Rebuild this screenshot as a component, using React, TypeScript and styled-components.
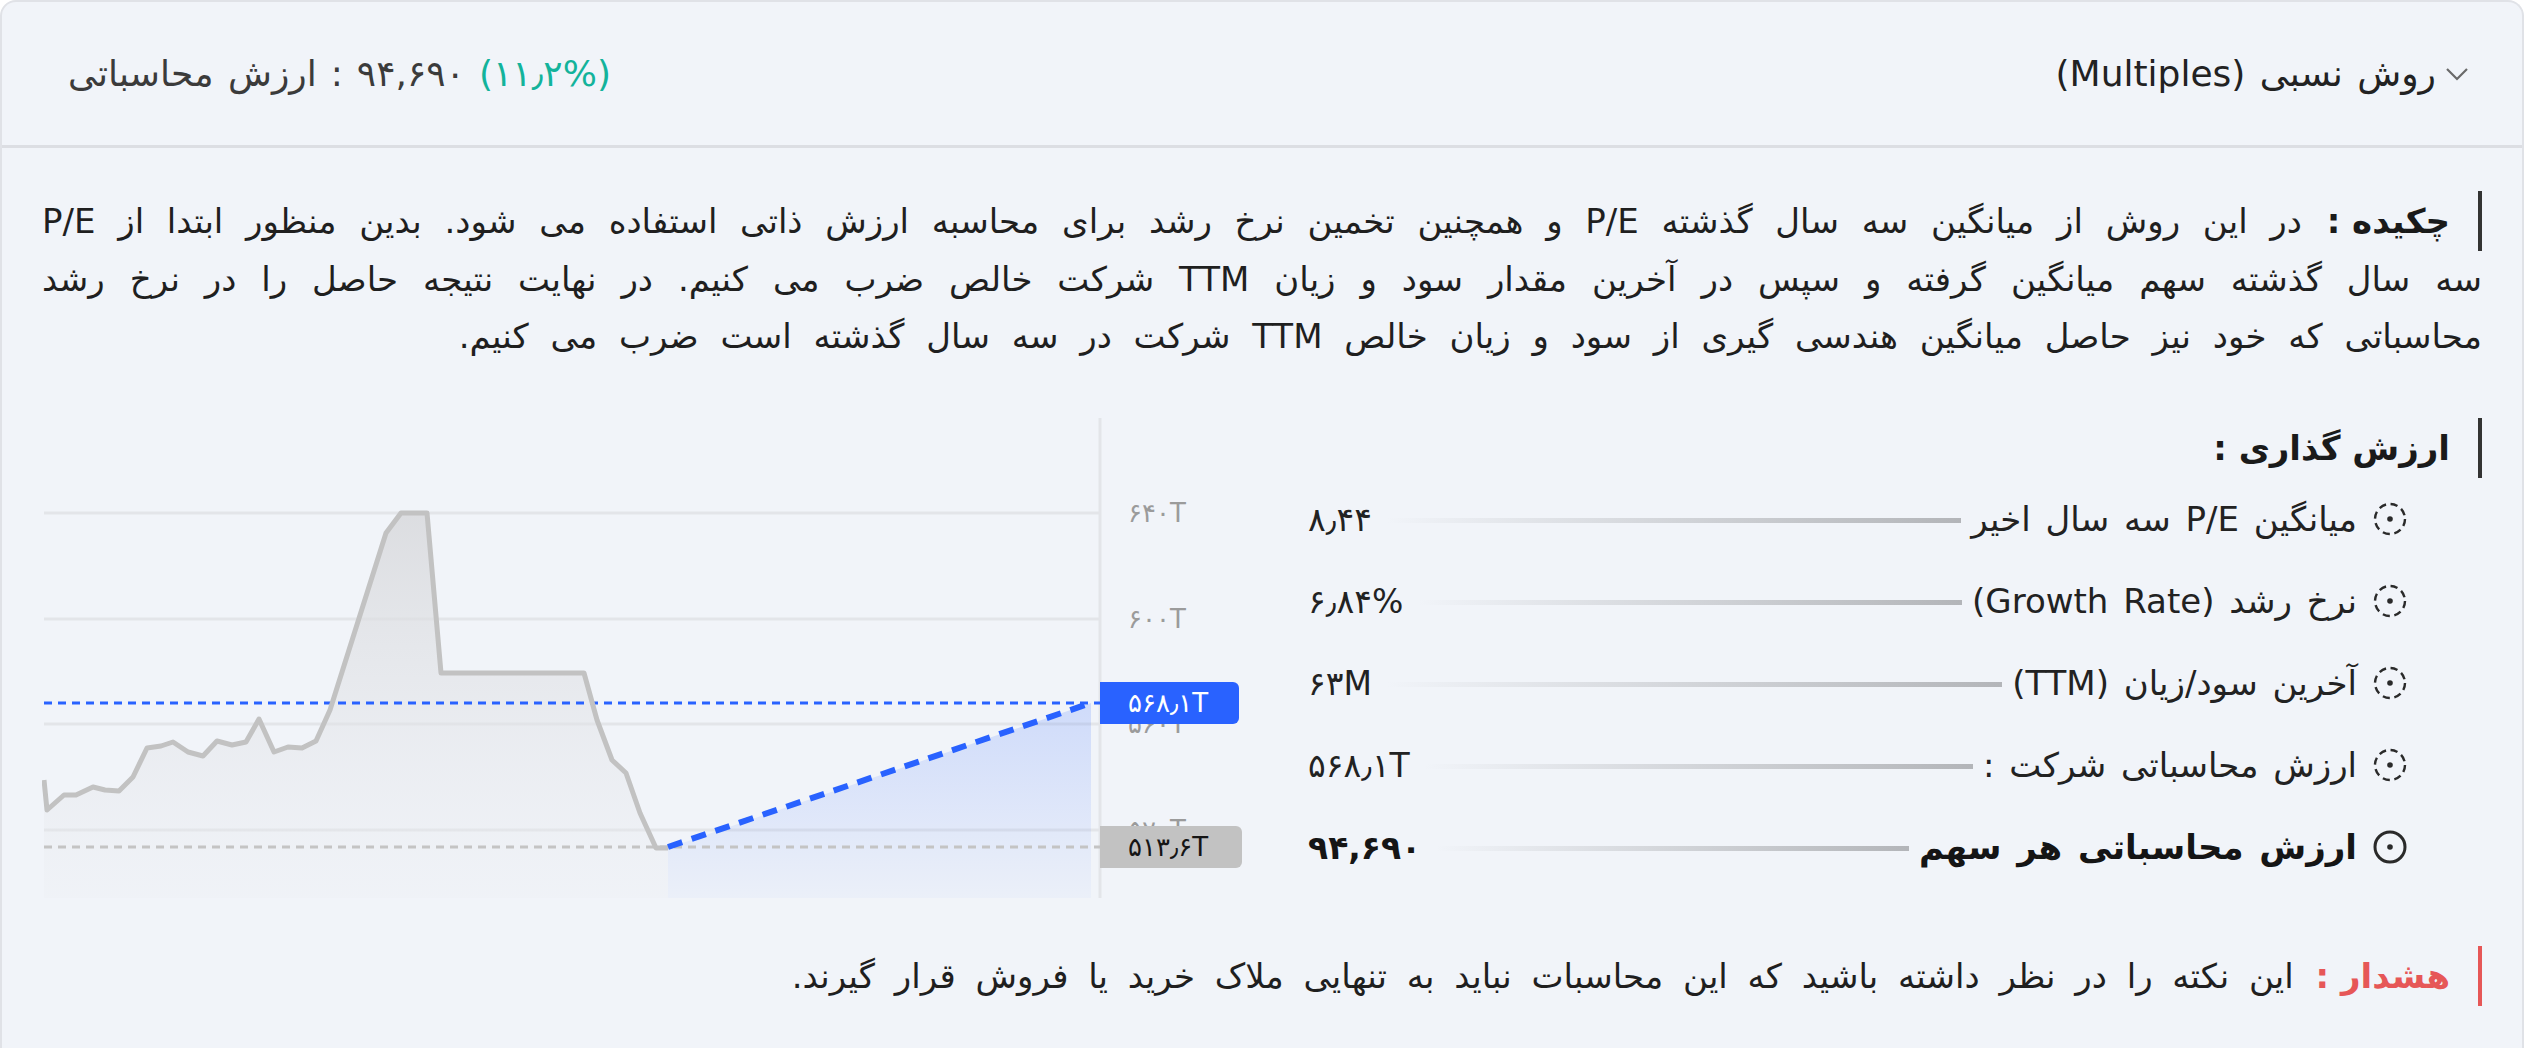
import React from "react";
import styled, { createGlobalStyle } from "styled-components";

const GlobalStyle = createGlobalStyle`
  html, body {
    margin: 0;
    padding: 0;
    background: #ffffff;
  }
  * {
    box-sizing: border-box;
  }
`;

const Card = styled.section`
  direction: rtl;
  width: 2524px;
  min-height: 1048px;
  background: #f1f4f9;
  border: 2px solid #e0e2e7;
  border-bottom: none;
  border-radius: 16px 16px 0 0;
  font-family: "DejaVu Sans", "Noto Sans", sans-serif;
  color: #1f1f1f;
`;

const Header = styled.header`
  display: flex;
  align-items: center;
  justify-content: space-between;
  height: 146px;
  padding: 0 52px 0 66px;
  border-bottom: 3px solid #dcdee3;
  font-size: 36px;
  word-spacing: 3px;
`;

const Toggle = styled.div`
  display: flex;
  align-items: center;
  gap: 8px;
  color: #222;
  cursor: pointer;
`;

const HeadValue = styled.div`
  display: flex;
  align-items: center;
  gap: 14px;
  color: #3b3b3b;
`;

const Pct = styled.span`
  color: #13b39b;
`;

const Body = styled.div`
  padding: 43px 40px 42px;
`;

const Summary = styled.p`
  margin: 0;
  font-size: 34px;
  line-height: 57px;
  word-spacing: 5px;
`;

const Line = styled.span<{ $last?: boolean }>`
  display: block;
  white-space: nowrap;
  text-align: ${(p) => (p.$last ? "start" : "justify")};
  text-align-last: ${(p) => (p.$last ? "start" : "justify")};
  word-spacing: ${(p) => (p.$last ? "11px" : "5px")};
`;

const Tag = styled.span<{ $color?: string }>`
  display: inline-block;
  line-height: 60px;
  padding-right: 28px;
  margin-left: 2px;
  border-right: 4px solid ${(p) => p.$color || "#333"};
  color: ${(p) => p.$color || "#1a1a1a"};
  font-weight: 700;
  word-spacing: 0;
`;

const Valuation = styled.div`
  display: grid;
  grid-template-columns: 1fr 1200px;
  gap: 66px;
  margin-top: 53px;
`;

const List = styled.div`
  display: flex;
  flex-direction: column;
`;

const ListTitle = styled.div`
  font-size: 34px;
  line-height: 59px;
`;

const Rows = styled.div`
  padding-right: 75px;
`;

const Row = styled.div<{ $strong?: boolean }>`
  display: flex;
  align-items: center;
  height: 82px;
  font-size: 34px;
  word-spacing: 4px;
  font-weight: ${(p) => (p.$strong ? 700 : 400)};
  color: ${(p) => (p.$strong ? "#151515" : "#222")};
`;

const IconSvg = styled.svg`
  flex: none;
  margin-left: 16px;
`;

const Label = styled.span`
  white-space: nowrap;
`;

const Track = styled.div`
  flex: 1;
  height: 5px;
  margin: 2px 10px 0 15px;
  background: linear-gradient(to left, #b3b5b9, rgba(214, 217, 222, 0));
`;

const Value = styled.span`
  white-space: nowrap;
  font-size: 33px;
`;

const ChartSvg = styled.svg`
  display: block;
  direction: ltr;
  font-family: "DejaVu Sans", sans-serif;
`;

const AxisText = styled.text<{ $fill?: string }>`
  font-size: 26px;
  fill: ${(p) => p.$fill || "#9b9b9b"};
`;

const Warning = styled.p`
  margin: 48px 0 0;
  font-size: 34px;
  line-height: 60px;
  word-spacing: 9px;
`;

const rows = [
  { label: "میانگین P/E سه سال اخیر", value: "۸٫۴۴" },
  { label: "نرخ رشد (Growth Rate)", value: "۶٫۸۴%" },
  { label: "آخرین سود/زیان (TTM)", value: "۶۳M" },
  { label: "ارزش محاسباتی شرکت :", value: "۵۶۸٫۱T" },
  { label: "ارزش محاسباتی هر سهم", value: "۹۴,۶۹۰", strong: true },
];

// price history, in chart pixels
const series: [number, number][] = [
  [2, 362], [5, 392], [22, 377], [34, 377], [51, 369], [63, 372], [77, 373],
  [91, 359], [105, 330], [119, 328], [131, 324], [146, 334], [161, 338],
  [175, 323], [190, 327], [204, 324], [217, 301], [232, 334], [246, 329],
  [260, 330], [274, 323], [288, 292], [344, 115], [359, 95], [385, 95],
  [399, 255], [542, 255], [555, 302], [570, 342], [584, 355], [598, 395],
  [614, 430], [626, 430],
];

function DotCircle({ solid }: { solid?: boolean }) {
  return (
    <IconSvg width={34} height={34} viewBox="0 0 34 34">
      <circle
        cx="17"
        cy="17"
        r="15"
        fill="none"
        stroke="#2a2a2a"
        strokeWidth={solid ? 3 : 2.4}
        strokeDasharray={solid ? undefined : "7.2 4.6"}
      />
      <circle cx="17" cy="17" r="2.8" fill="#2a2a2a" />
    </IconSvg>
  );
}

function Chart() {
  const line = series.map((p) => p.join(",")).join(" ");
  const area = `2,480 ${line} 626,480`;
  const grid = [95, 201, 306, 412];
  const ticks = ["۶۴۰T", "۶۰۰T", "۵۶۰T", "۵۲۰T"];

  return (
    <ChartSvg width={1200} height={480} viewBox="0 0 1200 480">
      <defs>
        <linearGradient id="grayFill" x1="0" y1="95" x2="0" y2="480" gradientUnits="userSpaceOnUse">
          <stop offset="0" stopColor="#d8d9dc" stopOpacity="0.85" />
          <stop offset="1" stopColor="#e9ebef" stopOpacity="0.2" />
        </linearGradient>
        <linearGradient id="blueFill" x1="0" y1="285" x2="0" y2="480" gradientUnits="userSpaceOnUse">
          <stop offset="0" stopColor="#2962ff" stopOpacity="0.17" />
          <stop offset="1" stopColor="#2962ff" stopOpacity="0.03" />
        </linearGradient>
      </defs>

      {grid.map((y) => (
        <line key={y} x1="2" y1={y} x2="1058" y2={y} stroke="#e3e5e9" strokeWidth="3" />
      ))}
      <line x1="1058" y1="0" x2="1058" y2="480" stroke="#e3e5e9" strokeWidth="3" />

      {ticks.map((t, i) => (
        <AxisText key={t} x="1086" y={grid[i]} dominantBaseline="central">
          {t}
        </AxisText>
      ))}

      <polygon points={area} fill="url(#grayFill)" />
      <polygon points="626,430 1049,285 1049,480 626,480" fill="url(#blueFill)" />

      <line x1="2" y1="285" x2="1058" y2="285" stroke="#2962ff" strokeWidth="3" strokeDasharray="8 6" />
      <line x1="2" y1="429" x2="1058" y2="429" stroke="#c4c4c4" strokeWidth="3" strokeDasharray="8 6" />

      <polyline points={line} fill="none" stroke="#c2c2c2" strokeWidth="5" strokeLinejoin="round" />
      <line x1="626" y1="429" x2="1049" y2="285" stroke="#2962ff" strokeWidth="6" strokeDasharray="15 10" />

      <path d="M1058 264 H1191 a6 6 0 0 1 6 6 V300 a6 6 0 0 1 -6 6 H1058 Z" fill="#2962ff" />
      <AxisText x="1086" y="285" dominantBaseline="central" $fill="#ffffff">
        ۵۶۸٫۱T
      </AxisText>

      <path d="M1058 408 H1194 a6 6 0 0 1 6 6 V444 a6 6 0 0 1 -6 6 H1058 Z" fill="#c2c2c2" />
      <AxisText x="1086" y="429" dominantBaseline="central" $fill="#151515">
        ۵۱۳٫۶T
      </AxisText>
    </ChartSvg>
  );
}

export default function App() {
  return (
    <>
      <GlobalStyle />
      <Card>
        <Header>
          <Toggle>
            <svg width="26" height="16" viewBox="0 0 26 16">
              <polyline points="3,3 13,13 23,3" fill="none" stroke="#6a6a6a" strokeWidth="2.2" />
            </svg>
            <span>روش نسبی (Multiples)</span>
          </Toggle>
          <HeadValue>
            <Pct>(۱۱٫۲%)</Pct>
            <span>۹۴,۶۹۰</span>
            <span>:</span>
            <span>ارزش محاسباتی</span>
          </HeadValue>
        </Header>

        <Body>
          <Summary>
            <Line>
              <Tag>چکیده :</Tag> در این روش از میانگین سه سال گذشته P/E و همچنین تخمین نرخ رشد برای
              محاسبه ارزش ذاتی استفاده می شود. بدین منظور ابتدا از P/E
            </Line>
            <Line>
              سه سال گذشته سهم میانگین گرفته و سپس در آخرین مقدار سود و زیان TTM شرکت خالص ضرب می
              کنیم. در نهایت نتیجه حاصل را در نرخ رشد
            </Line>
            <Line $last>
              محاسباتی که خود نیز حاصل میانگین هندسی گیری از سود و زیان خالص TTM شرکت در سه سال گذشته
              است ضرب می کنیم.
            </Line>
          </Summary>

          <Valuation>
            <List>
              <ListTitle>
                <Tag>ارزش گذاری :</Tag>
              </ListTitle>
              <Rows>
                {rows.map((r) => (
                  <Row key={r.label} $strong={r.strong}>
                    <DotCircle solid={r.strong} />
                    <Label>{r.label}</Label>
                    <Track />
                    <Value>{r.value}</Value>
                  </Row>
                ))}
              </Rows>
            </List>
            <Chart />
          </Valuation>

          <Warning>
            <Tag $color="#e65757">هشدار :</Tag>{" "}
            این نکته را در نظر داشته باشید که این محاسبات نباید به تنهایی ملاک خرید یا فروش قرار گیرند.
          </Warning>
        </Body>
      </Card>
    </>
  );
}
